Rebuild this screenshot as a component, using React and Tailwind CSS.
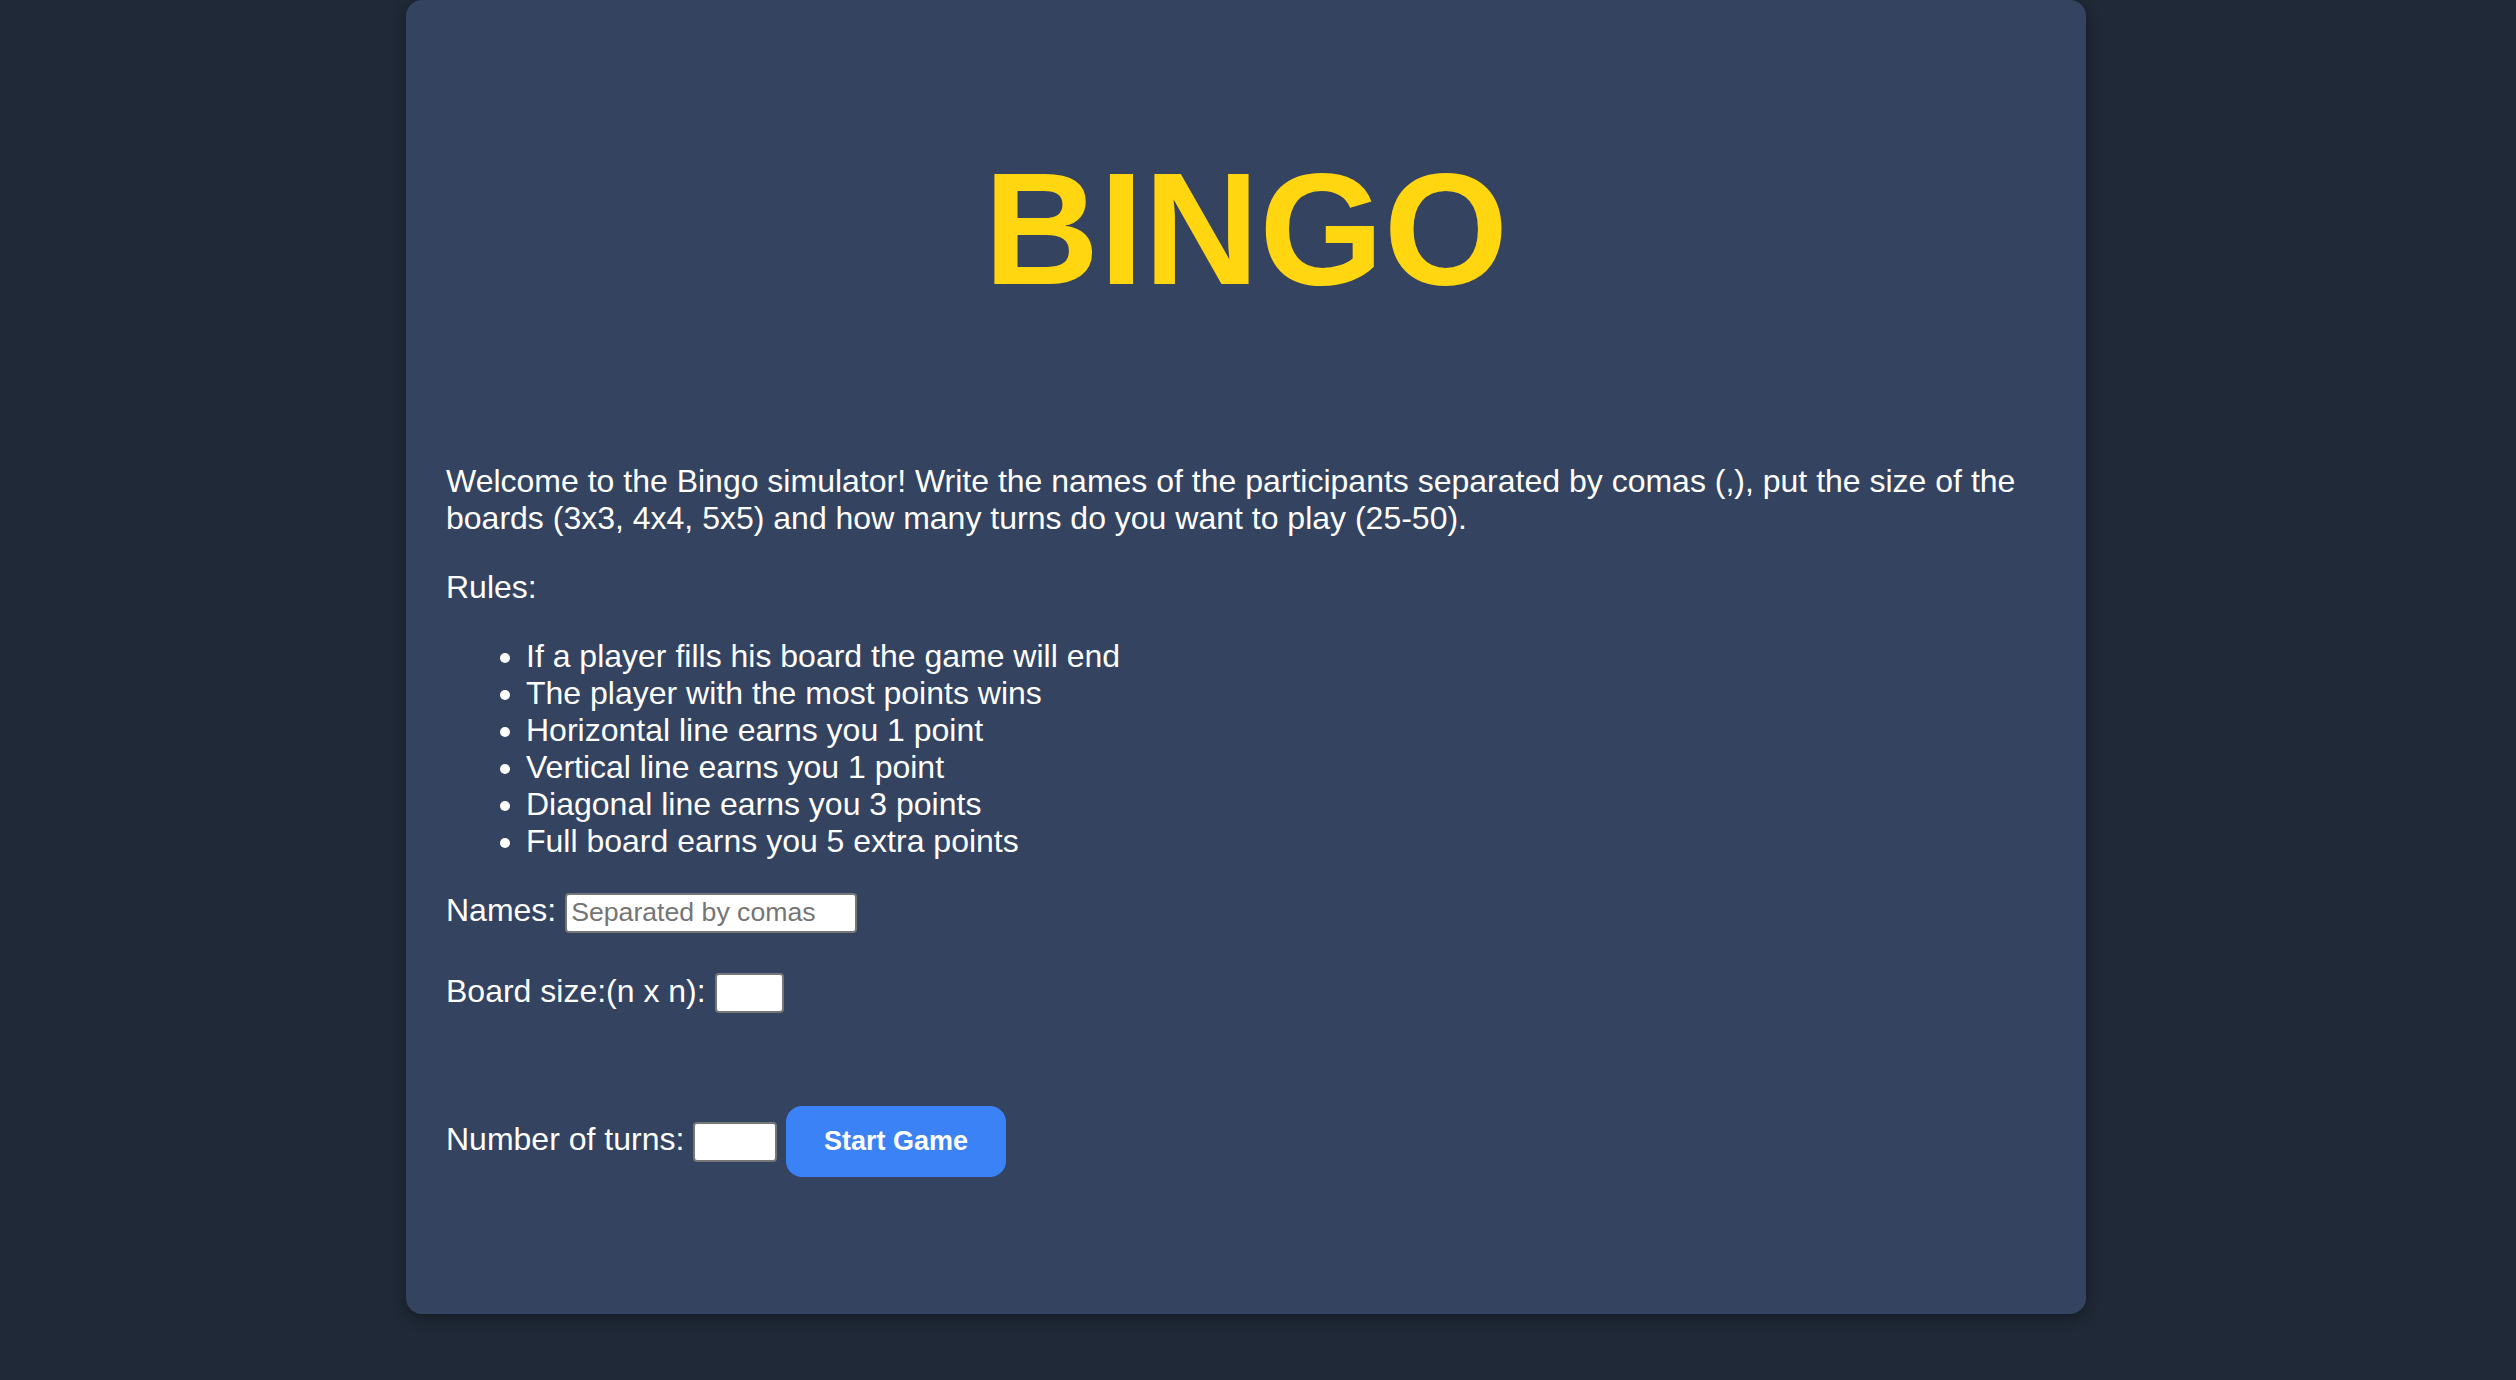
import { useState } from "react";

const rules = [
  "If a player fills his board the game will end",
  "The player with the most points wins",
  "Horizontal line earns you 1 point",
  "Vertical line earns you 1 point",
  "Diagonal line earns you 3 points",
  "Full board earns you 5 extra points",
];

export default function App() {
  const [names, setNames] = useState("");
  const [size, setSize] = useState("");
  const [turns, setTurns] = useState("");

  return (
    <div className="min-h-screen bg-[#1f2937] font-['Liberation_Sans',Arial,sans-serif] text-white">
      <div className="flex justify-center pr-[24px]">
        {/* card */}
        <div className="w-[1680px] bg-[#344360] rounded-2xl shadow-[0_4px_14px_rgba(0,0,0,0.35)] px-[40px] pt-[137px] pb-[137px]">
          <h1 className="text-center text-[160px] font-bold leading-[normal] text-[#ffd60f]">
            BINGO
          </h1>

          <p className="mt-[142px] text-[32px] leading-[normal]">
            Welcome to the Bingo simulator! Write the names of the participants
            separated by comas (,), put the size of the boards (3x3, 4x4, 5x5)
            and how many turns do you want to play (25-50).
          </p>

          <p className="mt-[32px] text-[32px] leading-[normal]">Rules:</p>

          <ul className="mt-[32px] pl-[80px] list-disc text-[32px] leading-[normal]">
            {rules.map((r) => (
              <li key={r}>{r}</li>
            ))}
          </ul>

          <p className="mt-[32px] text-[32px] leading-[normal]">
            Names:{" "}
            <input
              type="text"
              value={names}
              onChange={(e) => setNames(e.target.value)}
              placeholder="Separated by comas"
              className="w-[292px] h-[40px] bg-white text-black border-2 border-[#767676] rounded-[4px] px-[4px] text-[26.67px] leading-[normal] placeholder:text-[#757575]"
            />
          </p>

          <p className="mt-[40px] text-[32px] leading-[normal]">
            Board size:(n x n):{" "}
            <input
              type="text"
              value={size}
              onChange={(e) => setSize(e.target.value)}
              className="w-[69px] h-[40px] bg-white text-black border-2 border-[#767676] rounded-[4px] px-[4px] text-[26.67px] leading-[normal]"
            />
          </p>

          <div className="mt-[93px] text-[32px] leading-[normal]">
            Number of turns:{" "}
            <input
              type="text"
              value={turns}
              onChange={(e) => setTurns(e.target.value)}
              className="w-[84px] h-[40px] bg-white text-black border-2 border-[#767676] rounded-[4px] px-[4px] text-[26.67px] leading-[normal]"
            />{" "}
            <button className="h-[71px] w-[220px] bg-[#3b82f6] rounded-[16px] text-[27px] font-bold text-white leading-[normal]">
              Start Game
            </button>
          </div>
        </div>
      </div>
    </div>
  );
}
